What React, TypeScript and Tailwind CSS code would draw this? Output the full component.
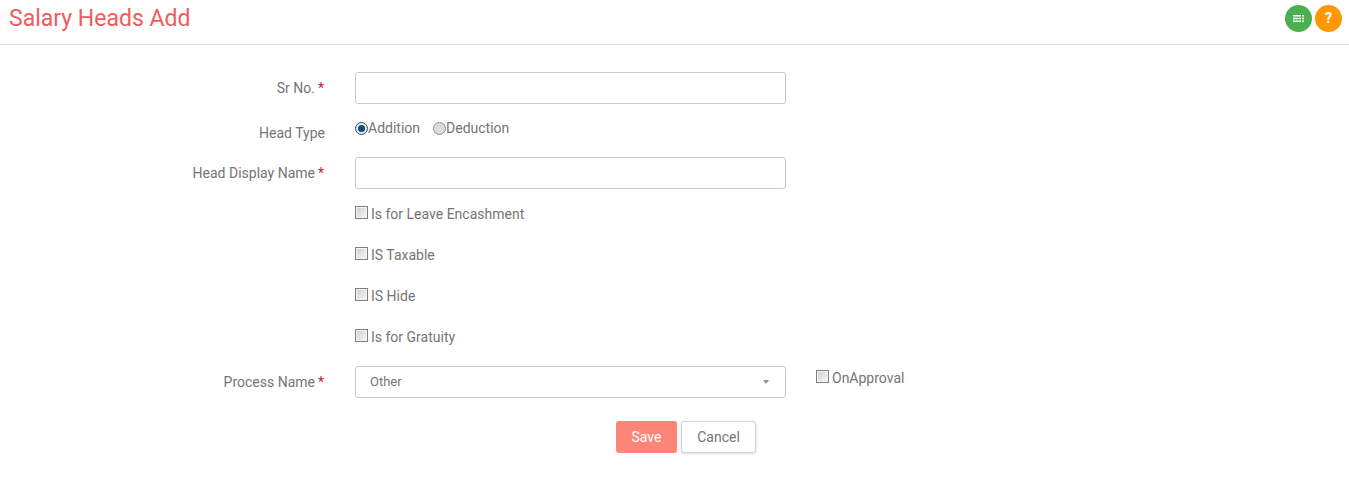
import React from 'react';

const Required = () => <span className="ml-[3px] text-[#d01c1c]">*</span>;

const labelClass = "w-[325px] pr-[1px] text-right text-[14px] leading-[20px] text-[#757575]";
const inputClass = "block h-[32px] w-[431px] rounded-[3px] border border-[#c8c8c8] bg-white";

const CheckBox = () => (
  <span className="block h-[13px] w-[13px] border border-[#7f7f7f] bg-gradient-to-br from-[#cfcfcf] to-[#f8f8f8] shadow-[inset_0_0_0_1px_#f4f4f4]" />
);

const Radio = ({ checked }: { checked?: boolean }) => (
  <span className={`flex h-[13px] w-[13px] items-center justify-center rounded-full border ${checked ? 'border-[#3d4f5e] bg-[#e8e8e8]' : 'border-[#8f8f8f] bg-[#dcdcdc]'}`}>
    {checked && <span className="h-[7px] w-[7px] rounded-full bg-[#0b4f7d]" />}
  </span>
);

const CheckRow = ({ label }: { label: string }) => (
  <div className="ml-[355px] flex h-[20px] items-start">
    <div className="mt-[2px]"><CheckBox /></div>
    <span className="ml-[3px] text-[14px] leading-[20px] text-[#757575]">{label}</span>
  </div>
);

const App: React.FC = () => {
  return (
    <div className="h-[477px] w-[1349px] overflow-hidden bg-white font-['Roboto',sans-serif]">
      {/* Header */}
      <div className="flex h-[45px] items-start justify-between border-b border-[#dedede] pl-[9px] pr-[7px]">
        <h1 className="mt-[4px] text-[23px] font-normal leading-[29px] text-[#f15b5b]">Salary Heads Add</h1>
        <div className="mt-[5px] flex gap-[3px]">
          <span className="flex h-[27px] w-[27px] items-center justify-center rounded-full bg-[#4caf50]">
            <svg width="11" height="7" viewBox="0 0 11 7" fill="#fff">
              <rect x="0" y="0" width="8" height="1.5" />
              <rect x="9" y="0" width="2" height="1.5" />
              <rect x="0" y="2.75" width="8" height="1.5" />
              <rect x="9" y="2.75" width="2" height="1.5" />
              <rect x="0" y="5.5" width="8" height="1.5" />
              <rect x="9" y="5.5" width="2" height="1.5" />
            </svg>
          </span>
          <span className="flex h-[27px] w-[27px] items-center justify-center rounded-full bg-[#ff9800] text-[14px] font-bold text-white">?</span>
        </div>
      </div>

      {/* Form */}
      <div className="pt-[27px]">
        <div className="flex items-center">
          <label className={labelClass}>Sr No.<Required /></label>
          <div className="ml-[30px]"><input className={inputClass} /></div>
        </div>

        <div className="mt-[14px] flex h-[25px] items-start">
          <label className={`${labelClass} mt-[5px] !w-[326px]`}>Head Type</label>
          <div className="ml-[29px] flex items-center text-[14px] leading-[20px] text-[#757575]">
            <Radio checked />
            <span>Addition</span>
            <span className="ml-[13px]"><Radio /></span>
            <span>Deduction</span>
          </div>
        </div>

        <div className="mt-[14px] flex items-center">
          <label className={labelClass}>Head Display Name<Required /></label>
          <div className="ml-[30px]"><input className={inputClass} /></div>
        </div>

        <div className="mt-[15px] flex flex-col gap-[21px]">
          <CheckRow label="Is for Leave Encashment" />
          <CheckRow label="IS Taxable" />
          <CheckRow label="IS Hide" />
          <CheckRow label="Is for Gratuity" />
        </div>

        <div className="mt-[19px] flex items-center">
          <label className={labelClass}>Process Name<Required /></label>
          <div className="ml-[30px] flex h-[32px] w-[431px] items-center justify-between rounded-[3px] border border-[#c8c8c8] bg-white pl-[14px] pr-[16px] text-[13px] text-[#757575]">
            <span>Other</span>
            <span className="h-0 w-0 border-x-[3px] border-t-[4px] border-x-transparent border-t-[#8a9499]" />
          </div>
          <div className="ml-[30px] -mt-[8px] flex items-start">
            <div className="mt-[2px]"><CheckBox /></div>
            <span className="ml-[3px] text-[14px] leading-[20px] text-[#757575]">OnApproval</span>
          </div>
        </div>

        <div className="ml-[616px] mt-[23px] flex gap-[4px]">
          <button className="h-[32px] w-[61px] rounded-[3px] bg-[#fb8678] text-[14px] text-white">Save</button>
          <button className="h-[32px] w-[75px] rounded-[3px] border border-[#d4d4d4] bg-white text-[14px] text-[#757575] shadow-[0_1px_3px_rgba(0,0,0,0.15)]">Cancel</button>
        </div>
      </div>
    </div>
  );
};

export default App;
